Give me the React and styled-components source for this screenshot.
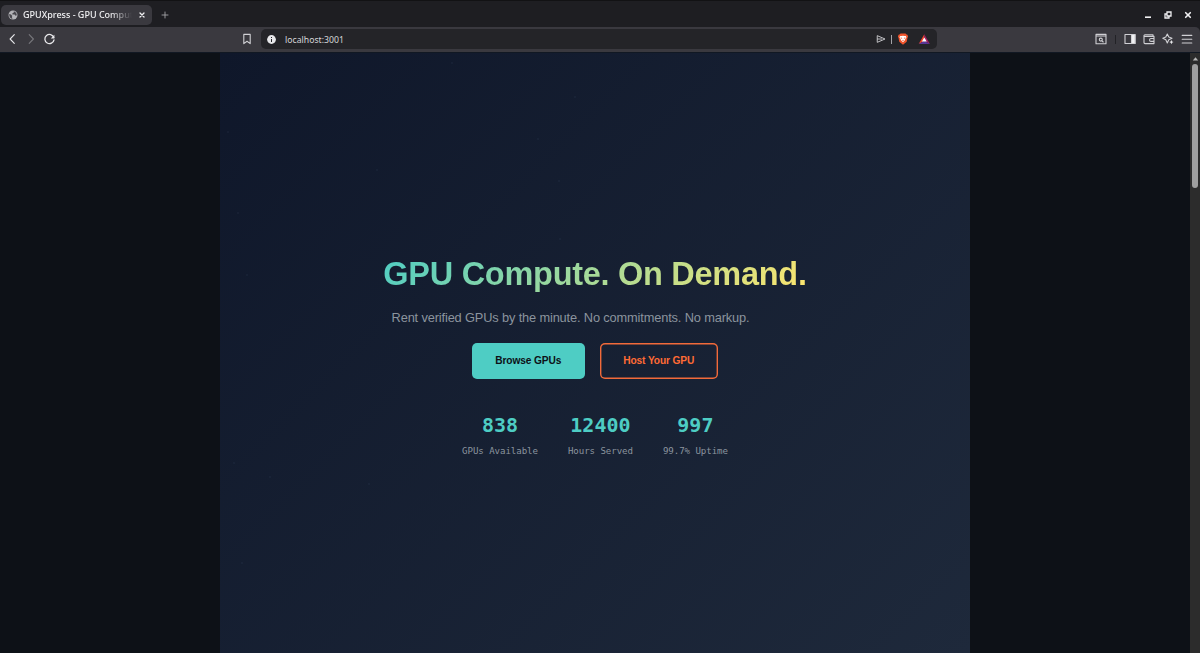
import styled, { createGlobalStyle } from "styled-components";

const GlobalStyle = createGlobalStyle`
  * {
    box-sizing: border-box;
  }
  body {
    margin: 0;
    overflow: hidden;
    background: #0d1117;
    font-family: "Liberation Sans", Arial, sans-serif;
  }
`;

const Window = styled.div`
  width: 1200px;
  height: 653px;
  display: flex;
  flex-direction: column;
  background: #1e1e22;
`;

const TabBar = styled.div`
  height: 27px;
  display: flex;
  align-items: center;
  padding: 1px 0 0 1px;
  border-top: 1px solid #121214;
`;

const Tab = styled.div`
  width: 151px;
  height: 20px;
  border-radius: 5px;
  background: #3a393f;
  display: flex;
  align-items: center;
  padding: 0 6px 0 7px;
`;

const TabTitle = styled.div`
  width: 109px;
  margin: 0 6px 0 5px;
  white-space: nowrap;
  font: 500 9px/15px "Noto Sans", sans-serif;
  color: #f1f1f3;
  mask-image: linear-gradient(to right, black 80%, transparent 100%);
`;

const NewTab = styled.div`
  display: flex;
  margin-left: 9px;
`;

const WindowControls = styled.div`
  display: flex;
  align-items: center;
  gap: 10px;
  margin: 0 7px 0 auto;
`;

const Toolbar = styled.div`
  height: 25px;
  display: flex;
  align-items: center;
  padding-bottom: 1px;
  background: #3a393f;
  border-radius: 0 5px 0 0;
`;

const NavButtons = styled.div`
  width: 241px;
  display: flex;
  align-items: center;
  gap: 6px;
  padding-left: 6px;
`;

const AddressBar = styled.div`
  width: 676px;
  height: 20px;
  margin-left: 8px;
  padding: 0 7px 0 5px;
  border-radius: 5px;
  background: #242428;
  display: flex;
  align-items: center;
`;

const Url = styled.div`
  flex: 1;
  margin-left: 8px;
  padding-top: 1px;
  font: 400 8.7px/16px "Noto Sans", sans-serif;
  color: #d6d6d9;
`;

const Separator = styled.div`
  width: 1px;
  height: 9px;
  margin: ${({ $margin }) => $margin};
  background: ${({ $color }) => $color};
`;

const Actions = styled.div`
  display: flex;
  align-items: center;
  margin: 0 7.5px 0 auto;
`;

const ActionGroup = styled.div`
  display: flex;
  gap: 7px;
`;

const Viewport = styled.div`
  flex: 1;
  min-height: 0;
  display: flex;
  border-top: 1px solid #111823;
  background: #0d1117;
`;

const Page = styled.main`
  flex: 1;
  display: flex;
  justify-content: center;
`;

const Scrollbar = styled.div`
  width: 10px;
  display: flex;
  flex-direction: column;
  align-items: center;
  padding-top: 3px;
  background: #2c2c2c;
`;

const Thumb = styled.div`
  width: 6px;
  height: 124px;
  margin-top: 2px;
  border-radius: 3px;
  background: #9f9f9f;
`;

const Hero = styled.section`
  position: relative;
  width: 750px;
  display: flex;
  justify-content: center;
  padding-top: 200px;
  background: linear-gradient(135deg, #0f172a 0%, #1e293b 100%);
`;

const Particles = styled.svg`
  position: absolute;
  inset: 0;
  width: 100%;
  height: 100%;
`;

const HeroContent = styled.div`
  position: relative;
  width: 424px;
  display: flex;
  flex-direction: column;
  align-items: center;
`;

const Title = styled.h1`
  margin: 0;
  font-size: 32.5px;
  line-height: 42px;
  font-weight: 700;
  letter-spacing: -0.28px;
  white-space: nowrap;
  color: transparent;
  background: linear-gradient(135deg, #4ecdc4, #ffe66d);
  background-clip: text;
`;

const Subtitle = styled.p`
  align-self: flex-start;
  width: 375px;
  margin: 13px 0 15px;
  font-size: 12.8px;
  line-height: 20px;
  letter-spacing: -0.14px;
  text-align: center;
  white-space: nowrap;
  color: #8b949e;
`;

const Buttons = styled.div`
  display: flex;
  gap: 15px;
`;

const Button = styled.button`
  height: 36px;
  width: ${({ $outline }) => ($outline ? "118.5px" : "112.5px")};
  padding: 0 0 1px;
  border: none;
  border-radius: 5px;
  box-shadow: ${({ $outline }) => ($outline ? "inset 0 0 0 1.4px #f26a3a" : "none")};
  background: ${({ $outline }) => ($outline ? "transparent" : "#4ecdc4")};
  color: ${({ $outline }) => ($outline ? "#ff6b35" : "#0d1117")};
  font: 600 10.2px "Liberation Sans", Arial, sans-serif;
  letter-spacing: -0.12px;
`;

const Stats = styled.div`
  display: flex;
  gap: 30px;
  margin-top: 30px;
  font-family: "DejaVu Sans Mono", monospace;
  text-align: center;
`;

const StatValue = styled.div`
  font-size: 20px;
  line-height: 32px;
  font-weight: 700;
  color: #4ecdc4;
`;

const StatLabel = styled.div`
  margin-top: 3px;
  font-size: 9.1px;
  line-height: 14px;
  letter-spacing: -0.06px;
  color: #8b949e;
`;

const Icon = ({ w = 12, h = 12, color = "#d0d0d4", sw = 1.1, children }) => (
  <svg
    width={w}
    height={h}
    viewBox={`0 0 ${w} ${h}`}
    fill="none"
    stroke={color}
    strokeWidth={sw}
    strokeLinecap="round"
    strokeLinejoin="round"
  >
    {children}
  </svg>
);

const stats = [
  { value: "838", label: "GPUs Available" },
  { value: "12400", label: "Hours Served" },
  { value: "997", label: "99.7% Uptime" },
];

const particles = [
  [232, 10], [355, 44], [157, 117], [318, 86], [8, 79], [339, 128],
  [18, 160], [340, 186], [27, 222], [14, 410], [50, 424], [149, 431],
  [22, 510],
];

const App = () => {
  return (
    <Window>
      <GlobalStyle />
      <TabBar>
        <Tab>
          <Icon w={10} h={10} color="none">
            <circle cx="5" cy="5" r="4.5" fill="#b4b4b8" />
            <path
              d="M1.2 4 3 4.6l1.3 1.3-.5 1.2.7 1.7C2.6 8.6 1 7 1.2 4ZM4.5 1.2 6 1.4l-.4 1.4-1.4.6.3 1 2.1.2.9 1.2 1.3-.5C9 3 7 1 4.5 1.2Z"
              fill="#47464c"
            />
          </Icon>
          <TabTitle>GPUXpress - GPU Comput</TabTitle>
          <Icon w={8} h={8} color="#f1f1f3" sw={1.3}>
            <path d="m2 2 4 4M6 2 2 6" />
          </Icon>
        </Tab>
        <NewTab>
          <Icon w={8} h={8} color="#a3a3a7" sw={0.9}>
            <path d="M4 1v6M1 4h6" />
          </Icon>
        </NewTab>
        <WindowControls>
          <Icon w={10} h={10} color="#f1f1f3" sw={1.6}>
            <path d="M2 7.2h6" strokeLinecap="butt" />
          </Icon>
          <Icon w={10} h={10} color="#f1f1f3" sw={1.3}>
            <path d="M4 2h4v4H4zM4 4H2v4h4V6" strokeLinejoin="miter" />
          </Icon>
          <Icon w={10} h={10} color="#f1f1f3" sw={1.6}>
            <path d="m2.7 2.7 4.6 4.6M7.3 2.7 2.7 7.3" />
          </Icon>
        </WindowControls>
      </TabBar>
      <Toolbar>
        <NavButtons>
          <Icon w={13} color="#e7e7ea">
            <path d="M8.3 1.6 4.1 6l4.2 4.4" />
          </Icon>
          <Icon w={12} color="#77777c">
            <path d="M4.2 1.6 8.4 6l-4.2 4.4" />
          </Icon>
          <Icon w={13} color="#e7e7ea" sw={1.3}>
            <path d="M10.8 4.5a4.6 4.6 0 1 0 .2 2.3" />
            <path d="M11.4 1.8v3.6H7.8Z" fill="#e7e7ea" stroke="none" />
          </Icon>
        </NavButtons>
        <Icon>
          <path d="M2.8 1.4h6.4v9.2L6 8.2l-3.2 2.4Z" />
        </Icon>
        <AddressBar>
          <Icon w={11} h={11} color="none">
            <circle cx="5.5" cy="5.5" r="4.4" fill="#e7e7ea" />
            <path d="M5 4.9h1v3H5zM5 3h1v1.1H5z" fill="#242428" />
          </Icon>
          <Url>localhost:3001</Url>
          <Icon w={10} h={10} sw={0.9}>
            <path d="M1.6 1.8 9 5 1.6 8.2ZM1.6 5h4" />
          </Icon>
          <Separator $margin="0 5px" $color="#a3a3a7" />
          <Icon w={12} color="none">
            <path
              d="M3.5.5h5l1 1 .9.2.7 1.8-.6 1.3-.8 4L6 11.7 2.3 8.8l-.8-4L.9 3.5l.7-1.8.9-.2Z"
              fill="#f0542b"
            />
            <path
              d="m3.3 2.9 1.4.2L6 2.8l1.3.3 1.4-.2.8 1.3-1.4 2 .1.8-1.1 1L6 9.2 4.8 8l-1.1-1 .1-.8-1.4-2Z"
              fill="#fff"
            />
            <path d="m3.4 4.2 1.9.7-.5 1Zm5.2 0-1.9.7.5 1ZM5 7.2l1-.5 1 .5-1 .9Z" fill="#f0542b" />
          </Icon>
          <Icon w={21} color="none">
            <path d="M15.3 1.2 9.7 11l5.6-3.2Z" fill="#f0452c" />
            <path d="M15.3 1.2 20.9 11l-5.6-3.2Z" fill="#9e1f63" />
            <path d="m9.7 11 5.6-3.2 5.6 3.2Z" fill="#5a3596" />
            <path d="m15.3 4.5 2.4 4h-4.8Z" fill="#fff" />
          </Icon>
        </AddressBar>
        <Actions>
          <Icon>
            <path d="M1 1.4h10v9.4H1zM1 3h10" />
            <circle cx="5.8" cy="6.6" r="1.5" />
            <path d="M7 7.8 8.2 9" />
          </Icon>
          <Separator $margin="0 8px" $color="#222226" />
          <ActionGroup>
            <Icon>
              <path d="M1 1.5h10v9H1z" />
              <path d="M7.5 1.5H11v9H7.5z" fill="#f1f1f3" />
            </Icon>
            <Icon>
              <path d="M10 3.4V1.8H2A1 1 0 0 0 1 2.9v6.7a1 1 0 0 0 1 1h9V3.4H2M11 5.5H8a1.4 1.4 0 0 0 0 2.9h3" />
            </Icon>
            <Icon>
              <path d="M5.3 1 6.8 4 10 5.3 6.8 6.8 5.3 10 3.8 6.8.8 5.3 3.8 4Z" />
              <path
                d="m9.4 7 .7 1.4 1.4.7-1.4.7-.7 1.4-.7-1.4-1.4-.7 1.4-.7Z"
                fill="#e7e7ea"
                stroke="none"
              />
            </Icon>
            <Icon>
              <path d="M1.2 2.4h9.6M1.2 6.2h9.6M1.2 10h9.6" />
            </Icon>
          </ActionGroup>
        </Actions>
      </Toolbar>
      <Viewport>
        <Page>
          <Hero>
            <Particles>
              {particles.map(([x, y]) => (
                <circle key={`${x}-${y}`} cx={x} cy={y} r="1.3" fill="#6f8aa5" opacity="0.06" />
              ))}
            </Particles>
            <HeroContent>
              <Title>GPU Compute. On Demand.</Title>
              <Subtitle>
                Rent verified GPUs by the minute. No commitments. No markup.
              </Subtitle>
              <Buttons>
                <Button>Browse GPUs</Button>
                <Button $outline>Host Your GPU</Button>
              </Buttons>
              <Stats>
                {stats.map(({ value, label }) => (
                  <div key={label}>
                    <StatValue>{value}</StatValue>
                    <StatLabel>{label}</StatLabel>
                  </div>
                ))}
              </Stats>
            </HeroContent>
          </Hero>
        </Page>
        <Scrollbar>
          <Icon w={7} h={6} color="none">
            <path d="M3.5 1.2 6.2 4.6H.8Z" fill="#b5b5b5" />
          </Icon>
          <Thumb />
        </Scrollbar>
      </Viewport>
    </Window>
  );
};

export default App;
